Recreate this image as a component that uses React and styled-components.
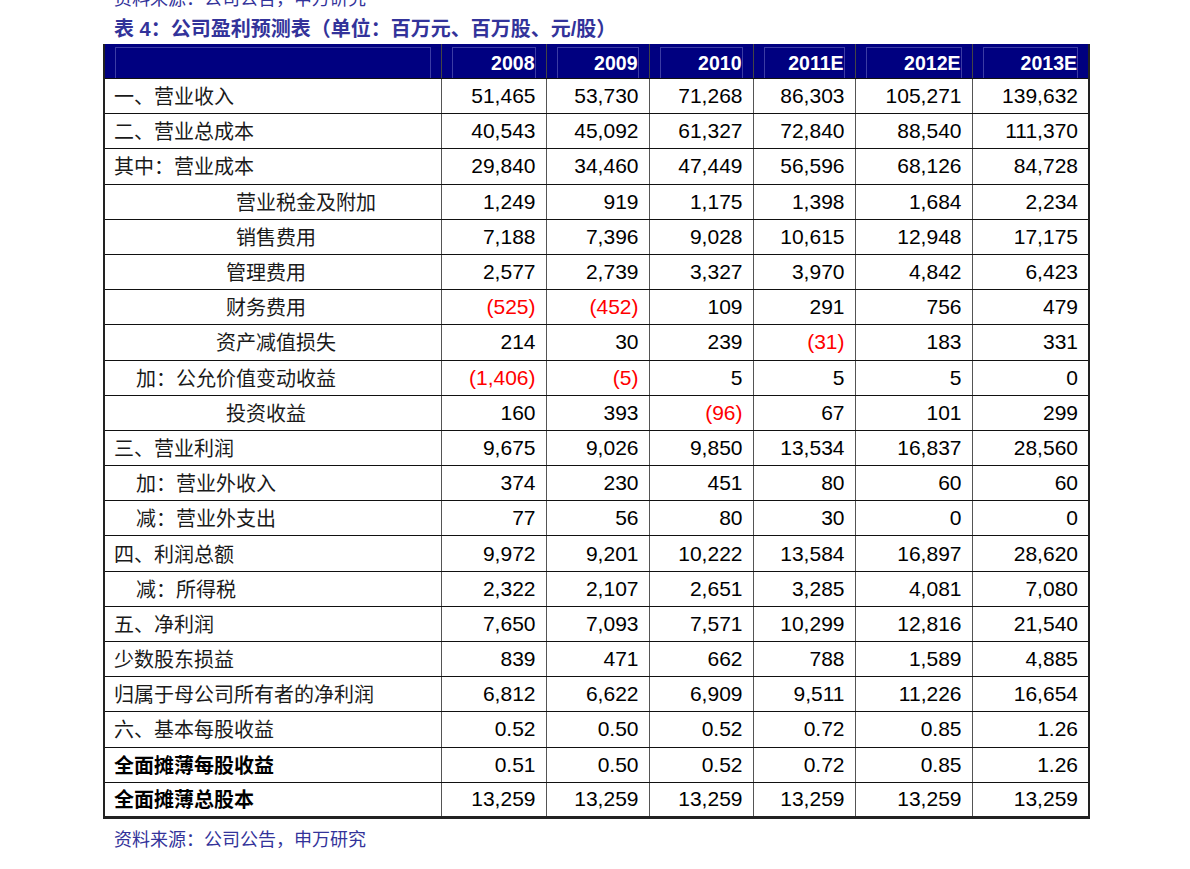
import React from "react";
import styled, { createGlobalStyle } from "styled-components";

const GlobalStyle = createGlobalStyle`
  body {
    margin: 0;
    background: #fff;
    font-family: "Liberation Sans", Arial, sans-serif;
  }
`;

const years = ["2008", "2009", "2010", "2011E", "2012E", "2013E"];

// indent = distance of the label from the cell's left edge
const rows = [
  { label: "一、营业收入", values: ["51,465", "53,730", "71,268", "86,303", "105,271", "139,632"] },
  { label: "二、营业总成本", values: ["40,543", "45,092", "61,327", "72,840", "88,540", "111,370"] },
  { label: "其中：营业成本", values: ["29,840", "34,460", "47,449", "56,596", "68,126", "84,728"] },
  { label: "营业税金及附加", indent: 131, values: ["1,249", "919", "1,175", "1,398", "1,684", "2,234"] },
  { label: "销售费用", indent: 131, values: ["7,188", "7,396", "9,028", "10,615", "12,948", "17,175"] },
  { label: "管理费用", indent: 121, values: ["2,577", "2,739", "3,327", "3,970", "4,842", "6,423"] },
  { label: "财务费用", indent: 121, values: ["(525)", "(452)", "109", "291", "756", "479"] },
  { label: "资产减值损失", indent: 111, values: ["214", "30", "239", "(31)", "183", "331"] },
  { label: "加：公允价值变动收益", indent: 31, values: ["(1,406)", "(5)", "5", "5", "5", "0"] },
  { label: "投资收益", indent: 121, values: ["160", "393", "(96)", "67", "101", "299"] },
  { label: "三、营业利润", values: ["9,675", "9,026", "9,850", "13,534", "16,837", "28,560"] },
  { label: "加：营业外收入", indent: 31, values: ["374", "230", "451", "80", "60", "60"] },
  { label: "减：营业外支出", indent: 31, values: ["77", "56", "80", "30", "0", "0"] },
  { label: "四、利润总额", values: ["9,972", "9,201", "10,222", "13,584", "16,897", "28,620"] },
  { label: "减：所得税", indent: 31, values: ["2,322", "2,107", "2,651", "3,285", "4,081", "7,080"] },
  { label: "五、净利润", values: ["7,650", "7,093", "7,571", "10,299", "12,816", "21,540"] },
  { label: "少数股东损益", values: ["839", "471", "662", "788", "1,589", "4,885"] },
  { label: "归属于母公司所有者的净利润", values: ["6,812", "6,622", "6,909", "9,511", "11,226", "16,654"] },
  { label: "六、基本每股收益", values: ["0.52", "0.50", "0.52", "0.72", "0.85", "1.26"] },
  { label: "全面摊薄每股收益", bold: true, values: ["0.51", "0.50", "0.52", "0.72", "0.85", "1.26"] },
  { label: "全面摊薄总股本", bold: true, values: ["13,259", "13,259", "13,259", "13,259", "13,259", "13,259"] },
];

const colWidths = [337, 105, 103, 104, 102, 117, 117];

function App() {
  return (
    <>
      <GlobalStyle />
      <Page>
        <Source>资料来源：公司公告，申万研究</Source>
        <Title>表 4：公司盈利预测表（单位：百万元、百万股、元/股）</Title>
        <Table>
          <colgroup>
            {colWidths.map((w, i) => (
              <col key={i} style={{ width: w }} />
            ))}
          </colgroup>
          <thead>
            <tr>
              <HeadCell>
                <HeadBox />
              </HeadCell>
              {years.map((y) => (
                <HeadCell key={y}>
                  <HeadBox>{y}</HeadBox>
                </HeadCell>
              ))}
            </tr>
          </thead>
          <tbody>
            {rows.map((r) => (
              <Row key={r.label}>
                <LabelCell indent={r.indent || 9} bold={r.bold}>
                  {r.label}
                </LabelCell>
                {r.values.map((v, i) => (
                  <NumCell key={i} neg={v.startsWith("(")}>
                    {v}
                  </NumCell>
                ))}
              </Row>
            ))}
          </tbody>
        </Table>
        <Footer>资料来源：公司公告，申万研究</Footer>
      </Page>
    </>
  );
}

const Page = styled.div`
  padding-left: 103px;
  margin-top: -11px;
`;

const Source = styled.div`
  font-family: "Liberation Sans", "Noto Sans CJK SC", sans-serif;
  font-size: 18px;
  line-height: 20px;
  height: 20px;
  color: #33339a;
  padding-left: 11px;
`;

const Title = styled.div`
  font-family: "Liberation Sans", "Noto Sans CJK SC", sans-serif;
  font-size: 20px;
  font-weight: bold;
  line-height: 22px;
  color: #33339a;
  padding-left: 11px;
  margin-top: 9px;
  margin-bottom: 4px;
`;

const Table = styled.table`
  width: 985px;
  table-layout: fixed;
  border-collapse: collapse;
  border-left: 2px solid #222;
  border-right: 2px solid #222;
  border-bottom: 3px solid #222;
`;

const HeadCell = styled.th`
  background: #000080;
  height: 34px;
  padding: 3px 10px 0 10px;
  border-left: 1px solid #444;
  border-right: 1px solid #444;
  border-bottom: 1px solid #111;
  vertical-align: bottom;
  box-sizing: border-box;
`;

const HeadBox = styled.div`
  height: 30px;
  border: 1px solid #3c3ca4;
  border-bottom: none;
  color: #fff;
  font-family: "Liberation Sans", Arial, sans-serif;
  font-weight: bold;
  font-size: 19.5px;
  line-height: 30px;
  text-align: right;
`;

const Row = styled.tr`
  height: 35.2px;
`;

const LabelCell = styled.td`
  font-family: "Noto Sans CJK SC", sans-serif;
  font-size: 20px;
  font-weight: ${(p) => (p.bold ? 700 : 400)};
  color: ${(p) => (p.bold ? "#000" : "#1a1a1a")};
  padding: 0 0 0 ${(p) => p.indent}px;
  white-space: nowrap;
  border-top: 1px solid #111;
  border-bottom: 1px solid #111;
  border-right: 1px solid #555;
  line-height: 24px;
`;

const NumCell = styled.td`
  font-family: "Liberation Sans", Arial, sans-serif;
  font-size: 21px;
  color: ${(p) => (p.neg ? "#ff0000" : "#000")};
  text-align: right;
  padding: 0 10px 0 0;
  border: 1px solid #555;
  border-top-color: #111;
  border-bottom-color: #111;
  line-height: 24px;
`;

const Footer = styled.div`
  font-family: "Liberation Sans", "Noto Sans CJK SC", sans-serif;
  font-size: 18px;
  line-height: 22px;
  color: #33339a;
  padding-left: 11px;
  margin-top: 10px;
`;

export default App;
